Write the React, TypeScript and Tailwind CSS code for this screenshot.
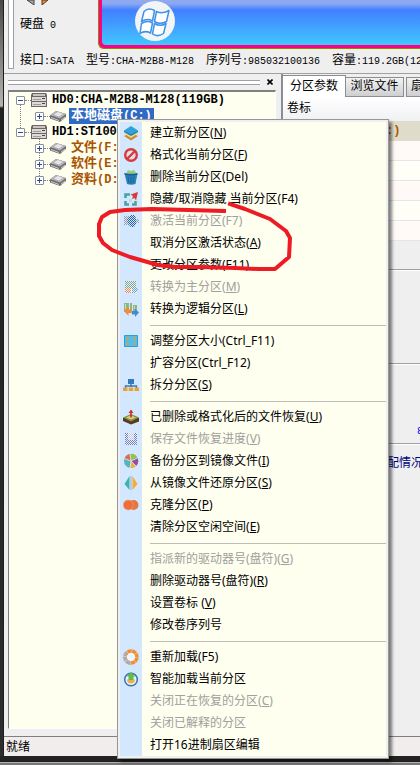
import React from "react";

const SONG = "font-['Liberation_Mono','Noto_Sans_CJK_SC',monospace]";
const UI = "font-['Noto_Sans','Noto_Sans_CJK_SC',sans-serif]";

/* Latin runs are set in a narrow fixed-width face, Chinese runs at full size. */
function Mixed({ text, latin = "text-[10px]" }: { text: string; latin?: string }) {
  const parts = text.match(/[\u4e00-\u9fff]+|[^\u4e00-\u9fff]+/g) ?? [];
  return (
    <>
      {parts.map((p, i) => (
        <span key={i} className={/[\u4e00-\u9fff]/.test(p) ? undefined : latin}>
          {p}
        </span>
      ))}
    </>
  );
}

/* ---------- icons ---------- */

const Svg = ({ children }: { children: React.ReactNode }) => (
  <svg width="16" height="16" viewBox="0 0 16 16" className="block" aria-hidden="true">
    {children}
  </svg>
);

/* Checkerboard fill used by the greyed-out icons. */
const Dither = ({ id, color }: { id: string; color: string }) => (
  <pattern id={id} width="2" height="2" patternUnits="userSpaceOnUse">
    <path d="M0 0h1v1H0zM1 1h1v1H1z" fill={color} shapeRendering="crispEdges" />
  </pattern>
);

const icons: Record<string, React.ReactNode> = {
  layers: (
    <Svg>
      <path d="M1 11 8 8 15 11 8 15.500Z" fill="#c98a35" />
      <path d="M1 8.500 8 5 15 8.500 8 13Z" fill="#f2d68a" />
      <path d="M1 5.500 8 1 15 5.500 8 10Z" fill="#2fa3da" />
      <path d="M1 5.500 8 9.500 15 5.500V7L8 11 1 7Z" fill="#1c78b0" />
    </Svg>
  ),
  forbid: (
    <Svg>
      <circle cx="8" cy="8" r="5.800" fill="#dfe0ea" stroke="#d8393a" strokeWidth="2.400" />
      <path d="M4 12 12 4" stroke="#d8393a" strokeWidth="2.400" />
    </Svg>
  ),
  trash: (
    <Svg>
      <path d="M3 4.500 5 1l3 1 3-1 2.500 3.500Z" fill="#93cf6c" />
      <path d="M1.500 4.500h13L12.500 15q-4.500 1.500-8.500 0Z" fill="#2c7fb8" />
      <path d="M1.500 4q6.500 2.500 13 0v1.500q-6.500 2-13 0Z" fill="#195b8a" />
      <path d="M5 7.500 6 14M8 7.500V14.500M11 7.500 10 14" stroke="#1b6597" />
    </Svg>
  ),
  hide: (
    <Svg>
      <path d="M2.500 7V3.500H7M2.500 10v3.500H6M9 13.500h3.500V10" stroke="#4aa3a0" strokeWidth="2.600" fill="none" />
      <path d="M15 1 7.500 3.500 10 5l-1 3 2.500-1L13 9.500Z" fill="#d93a3a" />
      <path d="M6 8h3v3H6z" fill="#b9dedd" />
    </Svg>
  ),
  activate: (
    <Svg>
      <defs>
        <Dither id="dither-navy" color="#245f97" />
        <Dither id="dither-grey" color="#9a9fa8" />
      </defs>
      <path d="M1 3h5v9H1zM11 6h5v4h-5z" fill="url(#dither-grey)" />
      <path d="M6 4 8 2h3l2 3v6l-2 3H8l-3-3-1-4Z" fill="url(#dither-navy)" />
    </Svg>
  ),
  toPrimary: (
    <Svg>
      <defs>
        <Dither id="dither-green" color="#7fa290" />
        <Dither id="dither-orange" color="#e08a5a" />
        <Dither id="dither-blue" color="#6a9fd0" />
      </defs>
      <path d="M2 2h11v12H2z" fill="#eef3f4" />
      <path d="M2 2h11v7H2z" fill="url(#dither-green)" />
      <path d="M2 9h6v5H2z" fill="url(#dither-orange)" />
      <path d="M9 8h4l2 3-3 3H9z" fill="url(#dither-blue)" />
    </Svg>
  ),
  toLogical: (
    <Svg>
      <path d="M1 2h5v9H1zM7 2h2v7H7zM10 4h4v6h-4z" fill="#8fb583" />
      <path d="M2 3h1v5H2zM11 5h1v3h-1z" fill="#c8dcbf" />
      <path d="M1 10 5.500 5.500v3H9v3.500H5.500v3Z" fill="#f08a3c" />
      <path d="M16 11.500 12 7.500V10H9v3.500h3V16Z" fill="#3f8fd0" />
    </Svg>
  ),
  resize: (
    <Svg>
      <path d="M1.500 2.500h13v11h-13z" fill="#4cc0ea" stroke="#2a9fd0" />
      <path d="M3 4h3L5.500 6.500 3 6.500ZM13 4h-3l.500 2.500 2.500 0ZM3 12h3l-.500-2.500L3 9.500ZM13 12h-3l.500-2.500 2.500 0Z" fill="#e09a50" />
    </Svg>
  ),
  split: (
    <Svg>
      <path d="M5 2h6v5H5z" fill="#3778b8" />
      <path d="M8 7v3M2.500 11V9h11v2" stroke="#3778b8" strokeWidth="1.400" fill="none" />
      <path d="M0 10.500h4.500V14H0zM5.700 10.500h4.500V14H5.700zM11.500 10.500H16V14h-4.500z" fill="#e8a132" />
    </Svg>
  ),
  recover: (
    <Svg>
      <path d="M0 9 8 6l8 3v3.500L8 15.500 0 12Z" fill="#5a3822" />
      <path d="M0 8.500 8 5l8 3.500-8 4Z" fill="#7c9a48" />
      <path d="M3 8.500 8 6.500l5 2-5 2Z" fill="#e3ca80" />
      <path d="M7.200 8.500V4H5.500L8 .500 10.500 4H8.800v4.500Z" fill="#d32b2b" />
    </Svg>
  ),
  saveProgress: (
    <Svg>
      <defs>
        <Dither id="dither-violet" color="#6f80c4" />
        <Dither id="dither-pale" color="#c3cbe6" />
      </defs>
      <path d="M2 2h12v12H2z" fill="#eef1fa" />
      <path d="M2 2h12v12H2z" fill="url(#dither-violet)" />
      <path d="M5 2h6v7H5z" fill="#f2f4fb" />
      <path d="M5 2h6v7H5z" fill="url(#dither-pale)" />
    </Svg>
  ),
  backup: (
    <Svg>
      <circle cx="8" cy="8" r="7" fill="#59b1c4" />
      <path d="M8 8 1.500 5.500A7 7 0 0 1 7 1Z" fill="#e06a4c" />
      <path d="M8 8 7 1a7 7 0 0 1 7 3Z" fill="#8fc34c" />
      <path d="M8 8l6.500-3A7 7 0 0 1 13 13Z" fill="#a04a9d" />
      <path d="M8 8l5 5a7 7 0 0 1-6 2Z" fill="#ecb23b" />
      <path d="M8 8 1.500 5.500M8 8 7 1M8 8l6.500-3M8 8l5 5M8 8l-1 7" stroke="#e9eef2" strokeWidth=".8" />
    </Svg>
  ),
  restore: (
    <Svg>
      <path d="M6.500 1v14L1.500 9Z" fill="#3cb3b0" />
      <path d="M9.500 1v14l5-6Z" fill="#f3ac3a" />
      <path d="M7.500 1h1v14h-1z" fill="#9ab0c4" />
    </Svg>
  ),
  clone: (
    <Svg>
      <circle cx="10.500" cy="8" r="5" fill="#e5763e" />
      <circle cx="5.300" cy="8" r="5" fill="#ec6f3a" stroke="#f3a57f" strokeWidth=".6" />
    </Svg>
  ),
  reload: (
    <Svg>
      <circle cx="8" cy="8" r="6" fill="#eef5ff" stroke="#ef8e35" strokeWidth="3.400" />
      <path d="M8 14a6 6 0 0 1-4.500-10" fill="none" stroke="#a9adb3" strokeWidth="3.400" />
      <circle cx="8" cy="8" r="6" fill="none" stroke="#f6d9bd" strokeWidth="3.600" strokeDasharray=".5 4.210" />
    </Svg>
  ),
  smart: (
    <Svg>
      <circle cx="8" cy="8.500" r="6.300" fill="#eaf4ff" stroke="#3b6fb5" strokeWidth="1.500" />
      <path d="M4 8.500h8q0 4-4 4t-4-4Z" fill="#f0b13e" />
      <path d="M8 1 12.500 5.500h-2V9h-5V5.500h-2Z" fill="#62bb4c" />
    </Svg>
  ),
};

/* ---------- context menu ---------- */

type Entry = { label: string; accel?: string; icon?: string; off?: boolean } | null;

const entries: Entry[] = [
  { label: "建立新分区", accel: "N", icon: "layers" },
  { label: "格式化当前分区", accel: "F", icon: "forbid" },
  { label: "删除当前分区(Del)", icon: "trash" },
  { label: "隐藏/取消隐藏 当前分区(F4)", icon: "hide" },
  { label: "激活当前分区(F7)", icon: "activate", off: true },
  { label: "取消分区激活状态", accel: "A" },
  { label: "更改分区参数(F11)" },
  { label: "转换为主分区", accel: "M", icon: "toPrimary", off: true },
  { label: "转换为逻辑分区", accel: "L", icon: "toLogical" },
  null,
  { label: "调整分区大小(Ctrl_F11)", icon: "resize" },
  { label: "扩容分区(Ctrl_F12)" },
  { label: "拆分分区", accel: "S", icon: "split" },
  null,
  { label: "已删除或格式化后的文件恢复", accel: "U", icon: "recover" },
  { label: "保存文件恢复进度", accel: "V", icon: "saveProgress", off: true },
  { label: "备份分区到镜像文件", accel: "I", icon: "backup" },
  { label: "从镜像文件还原分区", accel: "S", icon: "restore" },
  { label: "克隆分区", accel: "P", icon: "clone" },
  { label: "清除分区空闲空间", accel: "E" },
  null,
  { label: "指派新的驱动器号(盘符)", accel: "G", off: true },
  { label: "删除驱动器号(盘符)", accel: "R" },
  { label: "设置卷标 ", accel: "V" },
  { label: "修改卷序列号" },
  null,
  { label: "重新加载(F5)", icon: "reload" },
  { label: "智能加载当前分区", icon: "smart" },
  { label: "关闭正在恢复的分区", accel: "C", off: true },
  { label: "关闭已解释的分区", off: true },
  { label: "打开16进制扇区编辑" },
];

function ContextMenu() {
  return (
    <div
      role="menu"
      className={`absolute left-[117px] top-[119px] w-[272px] border border-[#979797] bg-[#f0f0f0] p-0.5 shadow-[3px_3px_3px_rgba(0,0,0,0.5)] ${UI}`}
    >
      <div className="bg-[linear-gradient(to_right,#d3e8ff_22px,#fffff0_22px)]">
        {entries.map((e, i) =>
          e ? (
            <button
              key={i}
              role="menuitem"
              disabled={e.off}
              className={`flex h-[22px] w-full items-center gap-2 pl-[3px] text-left text-xs whitespace-pre ${e.off ? "text-[#a0a09c]" : "text-black"}`}
            >
              <span className="w-[19px] shrink-0">{e.icon && icons[e.icon]}</span>
              <span>
                {e.label}
                {e.accel && (
                  <>
                    (<u className="underline-offset-1">{e.accel}</u>)
                  </>
                )}
              </span>
            </button>
          ) : (
            <div key={i} role="separator" className="flex h-[10px] items-center pl-[30px]">
              <div className="h-px w-full bg-[#bdbdb5]" />
            </div>
          ),
        )}
      </div>
    </div>
  );
}

/* ---------- disk tree ---------- */

function Toggle({ open }: { open?: boolean }) {
  return (
    <button
      aria-label={open ? "−" : "+"}
      className="flex size-[9px] shrink-0 items-center justify-center rounded-[1px] border border-[#8a9099] bg-white"
    >
      <svg width="5" height="5" viewBox="0 0 5 5" aria-hidden="true">
        <path d={open ? "M0 2h5v1H0z" : "M0 2h5v1H0zM2 0h1v5H2z"} fill="#2a4aa0" />
      </svg>
    </button>
  );
}

const Dots = () => <span className="w-[6px] shrink-0 border-t border-dotted border-[#808080]" />;

const DiskIcon = () => (
  <svg width="16" height="14" viewBox="0 0 16 14" className="shrink-0" aria-hidden="true">
    <path d="M1 0h14l1 2v12H0V2Z" fill="#6e6663" />
    <path d="M2 1h12v2H2z" fill="#c9c5c2" />
    <path d="M1 4h14v4H1zM1 9h14v4H1z" fill="#dcdad8" />
    <path d="M2 6h8v1H2zM2 11h8v1H2z" fill="#a39e9b" />
    <path d="M11 5h3v1h-3zM11 10h3v1h-3z" fill="#4b4643" />
  </svg>
);

const VolumeIcon = () => (
  <svg width="17" height="12" viewBox="0 0 17 12" className="shrink-0" aria-hidden="true">
    <path d="M0 5.500 6 1l10 3v3l-6 5L0 8.500Z" fill="#6c6c6c" />
    <path d="M0 5 6 1l10 3-6 4.500Z" fill="#b4b4b4" />
    <path d="M4 4.500l4-2.500 5 2-4 2.500Z" fill="#e6e6e6" />
    <path d="M1 7l8 3v1L1 8ZM11 9.500 15 6.500v1l-4 3Z" fill="#cfcfcf" />
  </svg>
);

function DiskRow({ name }: { name: string }) {
  return (
    <div className="flex h-4 items-center pl-[7px]">
      <Toggle open />
      <Dots />
      <DiskIcon />
      <span className="ml-[5px] text-xs font-bold whitespace-nowrap text-black">{name}</span>
    </div>
  );
}

function VolumeRow({ name, selected }: { name: string; selected?: boolean }) {
  return (
    <div className="flex h-4 items-center pl-[26px]">
      <Toggle />
      <Dots />
      <VolumeIcon />
      <span
        className={`ml-[2px] h-4 px-0.5 text-[13px] leading-4 font-bold whitespace-nowrap ${selected ? "bg-[#316ac5] text-white" : "text-[#a85400]"}`}
      >
        <Mixed text={name} latin="text-xs" />
      </span>
    </div>
  );
}

const Grip = () => <div className="h-[5px] flex-1 border-y border-[#a0a0a0] bg-white" />;

function TreePane() {
  return (
    <section className="flex w-[277px] shrink-0 flex-col pb-[7px] pl-1">
      <div className="flex h-4 items-center gap-1 pr-[5px]">
        <Grip />
        <button aria-label="×" className="flex size-3 items-center justify-center">
          <svg width="6" height="6" viewBox="0 0 6 6" aria-hidden="true">
            <path d="M0.500 0.500 5.500 5.500M5.500 0.500 0.500 5.500" stroke="#000" strokeWidth="1.600" />
          </svg>
        </button>
      </div>
      <div className="mr-[5px] flex-1 overflow-hidden border-t-2 border-r border-b border-l border-t-[#808080] border-r-white border-b-white border-l-[#808080] bg-[#fffff0]">
        <div className="relative">
          <div className="absolute top-3 left-[11px] h-8 border-l border-dotted border-[#808080]" />
          <div className="absolute top-10 left-[30px] h-12 border-l border-dotted border-[#808080]" />
          <div className="relative">
            <DiskRow name="HD0:CHA-M2B8-M128(119GB)" />
            <VolumeRow name="本地磁盘(C:)" selected />
            <DiskRow name="HD1:ST1000" />
            <VolumeRow name="文件(F:" />
            <VolumeRow name="软件(E:" />
            <VolumeRow name="资料(D:" />
          </div>
        </div>
      </div>
    </section>
  );
}

/* ---------- details ---------- */

function DetailsPane() {
  return (
    <section className="flex min-w-0 flex-1 flex-col overflow-hidden border-l-2 border-[#8a8d94] pt-px">
      <div role="tablist" className="flex h-[22px] shrink-0 items-end bg-[#efefef] text-xs whitespace-nowrap">
        <button role="tab" aria-selected="true" className="h-[22px] w-[63px] shrink-0 border-t border-r border-[#8a8d94] bg-white text-center">
          分区参数
        </button>
        <button role="tab" aria-selected="false" className="h-5 w-[58px] shrink-0 border border-l-0 border-[#8a8d94] bg-gradient-to-b from-[#f2f2f2] to-[#cfcfd2] text-center">
          浏览文件
        </button>
        <button role="tab" aria-selected="false" className="ml-0.5 h-5 w-[68px] shrink-0 border border-[#8a8d94] bg-gradient-to-b from-[#f2f2f2] to-[#cfcfd2] px-1 text-left">
          扇区编辑
        </button>
      </div>
      <div className="h-6 shrink-0 bg-gradient-to-b from-white to-[#f0f1f3] pl-1 text-xs leading-6">卷标</div>
      <div className="flex h-5 shrink-0 items-center bg-[#e0dccb] pl-[103px] text-xs font-bold text-[#a85400]">:)</div>
      {["bg-[#fffaf7]", "bg-[#fffff8]", "bg-[#fffaf7]", "bg-[#fffff8]", "bg-[#fffaf7]"].map((c, i) => (
        <div key={i} className={`h-5 shrink-0 border-b border-[#e6e6ea] ${c}`} />
      ))}
      <div className="h-[29px] shrink-0 border-b border-[#a0a0a0]" />
      <div className="h-[94px] shrink-0 border-t border-b border-t-white border-b-[#a0a0a0]" />
      <div className="flex h-20 shrink-0 items-end border-t border-b border-t-white border-b-[#a0a0a0] pb-1 pl-[134px] text-[10px] whitespace-nowrap text-[#0000ff]">
        8
      </div>
      <div className="flex-1 border-t border-white pt-[11px] pl-[92px] text-xs whitespace-nowrap text-[#000080]">分配情况</div>
    </section>
  );
}

/* ---------- disk banner ---------- */

function Banner() {
  return (
    <header className="flex h-[74px] shrink-0 overflow-hidden border-b border-[#a0a0a0] pl-1">
      <div className="h-[69px] w-[6px] shrink-0 border-x border-b border-[#a0a0a0] bg-white" />
      <div className="flex min-w-0 flex-1 flex-col pl-[6px]">
        <div className="flex h-[49px]">
          <div className="flex w-[78px] shrink-0 flex-col">
            <svg width="36" height="5" viewBox="0 0 36 5" className="shrink-0" aria-hidden="true">
              <path d="M7 0h7v5Z" fill="#a7a7a7" stroke="#444" />
              <path d="M22 0h6l-6 5Z" fill="#e08a4c" stroke="#5a3a20" />
            </svg>
            <span className="mt-3 text-xs leading-4 whitespace-pre">
              <Mixed text="硬盘 0" />
            </span>
          </div>
          <div className="flex-1 rounded-bl-md border-b border-l border-[#8a8a00] bg-[#ff0080] pb-[3px] pl-[3px]">
            <div className="h-full rounded-bl-sm bg-[linear-gradient(to_bottom,#91abf0_0px,#8aa6f2_4px,#4080ff_10px,#42a4ff_28px,#3fc8ff_45px)] pt-[1px] pl-[33px]">
              <svg width="40" height="40" viewBox="0 0 40 40" aria-hidden="true">
                <circle cx="20" cy="20" r="20" fill="#f2f4f6" />
                <g fill="#fff" stroke="#3d93ea" strokeWidth="1.500" strokeLinejoin="round">
                  <path d="M9 10.500Q13.500 6 19.500 9.500L17.500 20Q12 17 6.500 20.500Z" />
                  <path d="M21.500 10.500Q27 13.500 34 9.500L31.500 20.500Q25 24 19.500 20.500Z" />
                  <path d="M6.500 22.500Q12 19 17.500 22L15.500 32Q10 29 5 32.500Z" />
                  <path d="M19.500 22.500Q25 26 31 22.500L28.500 32.500Q22.500 36.500 17.500 33Z" />
                </g>
              </svg>
            </div>
          </div>
        </div>
        <p className="mt-1 text-xs leading-4 whitespace-pre">
          <Mixed text="接口:SATA  型号:CHA-M2B8-M128  序列号:985032100136  容量:119.2GB(12" />
        </p>
      </div>
    </header>
  );
}

export default function App() {
  return (
    <main className={`relative flex h-screen w-full flex-col overflow-hidden bg-[#2a2c2b] text-black ${SONG}`}>
      <div className="flex min-h-0 flex-1 bg-[#efefef]">
        <div className="w-1 shrink-0 border-r border-[#1d1d1d] bg-[linear-gradient(to_bottom,#4a4643_0px,#b5b2b0_106px,#1f2120_108px,#2c2e2d_100%)]" />
        <div className="flex min-w-0 flex-1 flex-col">
          <Banner />
          <div className="flex min-h-0 flex-1">
            <TreePane />
            <DetailsPane />
          </div>
          <footer className={`h-5 shrink-0 border-t border-[#808080] bg-[#f1edec] pl-0.5 text-xs leading-[19px] ${UI}`}>就绪</footer>
        </div>
      </div>
      <div className="h-[9px] shrink-0 border-b-2 border-[#777] bg-[#222] pt-[6px]">
        <div className="h-px bg-[#b0b0b0]" />
      </div>
      <ContextMenu />
      <svg width="200" height="72" viewBox="0 0 200 72" className="pointer-events-none absolute top-[200px] left-24" aria-hidden="true">
        <path
          d="M128 11 56 9 29 10 14 12 6 17 3 24V36L7 43 16 50 34 57 62 65 79 67H104L139 68 162 69 179 69 193 57 194 38 190 31 174 19 149 9 134 4"
          fill="none"
          stroke="#ed1c24"
          strokeWidth="4"
          strokeLinejoin="round"
          strokeLinecap="square"
        />
      </svg>
    </main>
  );
}
